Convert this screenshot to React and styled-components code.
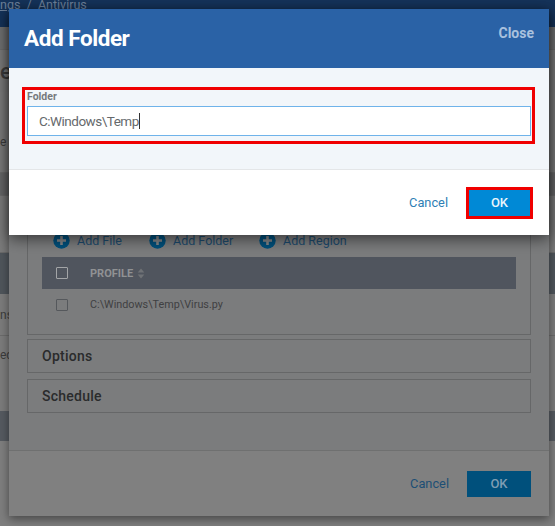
import React from "react";
import styled, { createGlobalStyle } from "styled-components";

const Global = createGlobalStyle`
  html, body { margin: 0; padding: 0; background: #7d7d7d; }
  * { box-sizing: border-box; }
  body { font-family: Roboto, "Liberation Sans", sans-serif; }
`;

const Page = styled.div`
  position: relative;
  width: 555px;
  height: 526px;
  overflow: hidden;
`;

const Band = styled.div`
  height: ${(p) => p.$h}px;
  background: ${(p) => p.$bg || "#7b7b7b"};
  border-bottom: ${(p) => (p.$line ? "1px solid #6b6b6b" : "none")};
  color: #3c3c3c;
  overflow: hidden;
  white-space: nowrap;
  font-size: ${(p) => p.$size || 12}px;
  font-weight: ${(p) => p.$weight || 400};
  display: flex;
  align-items: ${(p) => p.$align || "center"};
  padding-top: ${(p) => p.$top || 0}px;
`;

const Crumb = styled.div`
  color: #6d8099;
  font-size: 12.5px;
  line-height: 10px;
  span { text-decoration: underline; }
`;

const Modal = styled.div`
  position: absolute;
  left: 9px;
  top: 9px;
  width: 540px;
  display: flex;
  flex-direction: column;
`;

const BackModal = styled(Modal)`
  height: 507px;
  background: #808080;
  box-shadow: 0 3px 9px rgba(0, 0, 0, 0.45);
`;

const BackBody = styled.div`
  flex: 1;
  background: #7b7c7d;
  padding: 0 18px 37px;
  display: flex;
  flex-direction: column;
  justify-content: flex-end;
  gap: 4px;
`;

const Panel = styled.div`
  border: 1px solid #666768;
  border-top: none;
  padding: 0 14px 13px;
  display: flex;
  flex-direction: column;
`;

const Toolbar = styled.div`
  display: flex;
  align-items: center;
  height: 34px;
  padding-left: 11px;
`;

const AddLink = styled.div`
  display: flex;
  align-items: center;
  gap: 7px;
  color: #1d4a6c;
  font-size: 12.5px;
  width: ${(p) => p.$w}px;
`;

const TableHead = styled.div`
  height: 32px;
  background: #50555e;
  display: flex;
  align-items: center;
  padding-left: 14px;
  color: #909294;
  font-size: 11px;
  font-weight: 700;
`;

const TableRow = styled.div`
  height: 32px;
  padding: 0 0 1px 14px;
  display: flex;
  align-items: center;
  color: #3f4042;
  font-size: 10.8px;
`;

const Check = styled.div`
  width: 12px;
  height: 12px;
  border: 1px solid ${(p) => (p.$head ? "#a3a5a7" : "#55585c")};
  border-radius: 1px;
  margin-right: 22px;
`;

const Accordion = styled.div`
  height: 34px;
  border: 1px solid #666768;
  display: flex;
  align-items: center;
  padding-left: 14px;
  color: #2a2b2c;
  font-size: 14px;
  font-weight: 500;
  letter-spacing: 0.25px;
  & + & { margin-top: 2px; }
`;

const Footer = styled.div`
  height: ${(p) => p.$h}px;
  border-top: 1px solid ${(p) => p.$line};
  background: ${(p) => p.$bg};
  display: flex;
  align-items: center;
  justify-content: flex-end;
  padding-right: ${(p) => p.$pr}px;
  gap: ${(p) => p.$gap}px;
`;

const Cancel = styled.span`
  font-size: 12.8px;
  color: ${(p) => p.$color};
`;

const OkButton = styled.div`
  width: ${(p) => p.$w}px;
  height: ${(p) => p.$h}px;
  background: ${(p) => p.$bg};
  color: ${(p) => p.$color};
  font-size: 13px;
  font-weight: 500;
  display: flex;
  align-items: center;
  justify-content: center;
`;

const FrontModal = styled(Modal)`
  height: 226px;
  background: #fff;
  box-shadow: 0 4px 14px rgba(0, 0, 0, 0.55);
`;

const Header = styled.div`
  height: 59px;
  background: #2a62a6;
  display: flex;
  justify-content: space-between;
  padding: 0 15px;
`;

const Title = styled.div`
  color: #fff;
  font-size: 22.5px;
  font-weight: 700;
  letter-spacing: -0.45px;
  line-height: 58px;
`;

const Close = styled.div`
  color: #a9c1de;
  font-size: 14px;
  font-weight: 700;
  line-height: 49px;
`;

const Body = styled.div`
  height: 101px;
  background: #f2f6fa;
  padding: 19px 14px 0 13px;
`;

const RedFrame = styled.div`
  border: 3px solid #f00000;
`;

const FieldFrame = styled(RedFrame)`
  height: 57px;
  padding: 1px 1px 0 2px;
`;

const Label = styled.div`
  font-size: 10.5px;
  font-weight: 700;
  color: #76797c;
  line-height: 12px;
  height: 15px;
`;

const Input = styled.div`
  height: 30px;
  background: #fff;
  border: 1px solid #6fb3ea;
  padding-left: 11px;
  color: #66696c;
  font-size: 13.5px;
  letter-spacing: -0.5px;
  display: flex;
  align-items: center;
`;

const Caret = styled.span`
  display: inline-block;
  width: 1px;
  height: 16px;
  background: #333;
`;

const OkFrame = styled(RedFrame)`
  display: flex;
`;

const PlusIcon = () => (
  <svg width="17" height="17" viewBox="0 0 17 17" aria-hidden="true">
    <circle cx="8.5" cy="8.5" r="8.2" fill="#00507c" />
    <path d="M8.5 4v9M4 8.5h9" stroke="#858789" strokeWidth="2.6" />
  </svg>
);

const SortIcon = () => (
  <svg width="8" height="11" viewBox="0 0 8 11" style={{ marginLeft: 4 }} aria-hidden="true">
    <path d="M4 0.5 7.3 4.5H.7z" fill="#6f7276" />
    <path d="M4 10.5 7.3 6.5H.7z" fill="#6f7276" />
  </svg>
);

export default function App() {
  return (
    <Page>
      <Global />
      <Band $h={27} $bg="#15335a" $align="flex-start">
        <Crumb><span>ngs</span> &nbsp;/&nbsp; Antivirus</Crumb>
      </Band>
      <Band $h={23} $bg="#6f7071" $line />
      <Band $h={42} $bg="#797979" $size={22} $weight={500}>et</Band>
      <Band $h={81} $bg="#7a7a7a" $line $size={12} $top={20}>e</Band>
      <Band $h={23} $bg="#666768" $line />
      <Band $h={57} $bg="#7b7b7b" $line />
      <Band $h={41} $bg="#4f555b" />
      <Band $h={42} $bg="#7b7b7b" $line $size={12}>ns</Band>
      <Band $h={75} $bg="#7b7b7b" $size={12} $align="flex-start" $top={12}>ed</Band>
      <Band $h={30} $bg="#555a60" />
      <Band $h={85} $bg="#7e7e7e" />

      <BackModal>
        <BackBody>
          <Panel>
            <Toolbar>
              <AddLink $w={96}><PlusIcon />Add File</AddLink>
              <AddLink $w={110}><PlusIcon />Add Folder</AddLink>
              <AddLink $w={110}><PlusIcon />Add Region</AddLink>
            </Toolbar>
            <TableHead>
              <Check $head />
              PROFILE
              <SortIcon />
            </TableHead>
            <TableRow>
              <Check />
              C:\Windows\Temp\Virus.py
            </TableRow>
          </Panel>
          <Accordion>Options</Accordion>
          <Accordion>Schedule</Accordion>
        </BackBody>
        <Footer $h={66} $bg="#808080" $line="#6f7070" $pr={18} $gap={18}>
          <Cancel $color="#1d4f75">Cancel</Cancel>
          <OkButton $w={64} $h={26} $bg="#00507c" $color="#7f9db3">OK</OkButton>
        </Footer>
      </BackModal>

      <FrontModal>
        <Header>
          <Title>Add Folder</Title>
          <Close>Close</Close>
        </Header>
        <Body>
          <FieldFrame>
            <Label>Folder</Label>
            <Input>C:Windows\Temp<Caret /></Input>
          </FieldFrame>
        </Body>
        <Footer $h={66} $bg="#fff" $line="#e4e6e8" $pr={16} $gap={18}>
          <Cancel $color="#2f7fb5">Cancel</Cancel>
          <OkFrame>
            <OkButton $w={61} $h={26} $bg="#0089d6" $color="#eaf5fc">OK</OkButton>
          </OkFrame>
        </Footer>
      </FrontModal>
    </Page>
  );
}
